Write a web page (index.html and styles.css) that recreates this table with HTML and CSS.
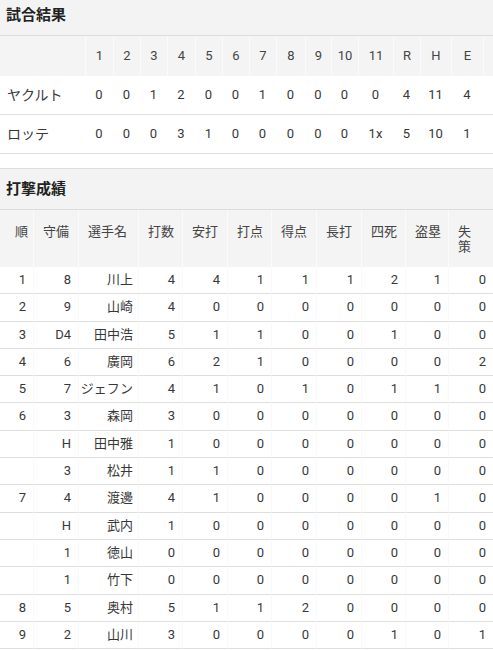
FILE: index.html
```html
<!DOCTYPE html>
<html lang="ja">
<head>
<meta charset="utf-8">
<title>試合結果</title>
<link rel="stylesheet" href="styles.css">
</head>
<body>
<section class="block">
  <h2 class="block-title first">試合結果</h2>
  <table class="linescore">
    <colgroup>
      <col class="c-team">
      <col class="c28"><col class="c27"><col class="c27"><col class="c28"><col class="c27"><col class="c27"><col class="c27"><col class="c29"><col class="c26"><col class="c27"><col class="c35"><col class="c27"><col class="c31"><col class="c32"><col>
    </colgroup>
    <thead>
      <tr>
        <th></th><th>1</th><th>2</th><th>3</th><th>4</th><th>5</th><th>6</th><th>7</th><th>8</th><th>9</th><th>10</th><th>11</th><th>R</th><th>H</th><th>E</th><th></th>
      </tr>
    </thead>
    <tbody>
      <tr>
        <td class="team">ヤクルト</td><td>0</td><td>0</td><td>1</td><td>2</td><td>0</td><td>0</td><td>1</td><td>0</td><td>0</td><td>0</td><td>0</td><td>4</td><td>11</td><td>4</td><td></td>
      </tr>
      <tr>
        <td class="team">ロッテ</td><td>0</td><td>0</td><td>0</td><td>3</td><td>1</td><td>0</td><td>0</td><td>0</td><td>0</td><td>0</td><td>1x</td><td>5</td><td>10</td><td>1</td><td></td>
      </tr>
    </tbody>
  </table>
</section>

<section class="block batting-block">
  <h2 class="block-title">打撃成績</h2>
  <table class="batting">
    <colgroup>
      <col class="b33"><col class="b45"><col class="b60"><col class="b44"><col class="b45"><col class="b44"><col class="b45"><col class="b45"><col class="b44"><col class="b43"><col class="b45">
    </colgroup>
    <thead>
      <tr>
        <th class="order">順</th><th>守備</th><th>選手名</th><th>打数</th><th>安打</th><th>打点</th><th>得点</th><th>長打</th><th>四死</th><th>盗塁</th><th>失<br>策</th>
      </tr>
    </thead>
    <tbody>
      <tr><td>1</td><td>8</td><td class="name">川上</td><td>4</td><td>4</td><td>1</td><td>1</td><td>1</td><td>2</td><td>1</td><td>0</td></tr>
      <tr><td>2</td><td>9</td><td class="name">山崎</td><td>4</td><td>0</td><td>0</td><td>0</td><td>0</td><td>0</td><td>0</td><td>0</td></tr>
      <tr><td>3</td><td>D4</td><td class="name">田中浩</td><td>5</td><td>1</td><td>1</td><td>0</td><td>0</td><td>1</td><td>0</td><td>0</td></tr>
      <tr><td>4</td><td>6</td><td class="name">廣岡</td><td>6</td><td>2</td><td>1</td><td>0</td><td>0</td><td>0</td><td>0</td><td>2</td></tr>
      <tr><td>5</td><td>7</td><td class="name">ジェフン</td><td>4</td><td>1</td><td>0</td><td>1</td><td>0</td><td>1</td><td>1</td><td>0</td></tr>
      <tr><td>6</td><td>3</td><td class="name">森岡</td><td>3</td><td>0</td><td>0</td><td>0</td><td>0</td><td>0</td><td>0</td><td>0</td></tr>
      <tr><td></td><td>H</td><td class="name">田中雅</td><td>1</td><td>0</td><td>0</td><td>0</td><td>0</td><td>0</td><td>0</td><td>0</td></tr>
      <tr><td></td><td>3</td><td class="name">松井</td><td>1</td><td>1</td><td>0</td><td>0</td><td>0</td><td>0</td><td>0</td><td>0</td></tr>
      <tr><td>7</td><td>4</td><td class="name">渡邊</td><td>4</td><td>1</td><td>0</td><td>0</td><td>0</td><td>0</td><td>1</td><td>0</td></tr>
      <tr><td></td><td>H</td><td class="name">武内</td><td>1</td><td>0</td><td>0</td><td>0</td><td>0</td><td>0</td><td>0</td><td>0</td></tr>
      <tr><td></td><td>1</td><td class="name">徳山</td><td>0</td><td>0</td><td>0</td><td>0</td><td>0</td><td>0</td><td>0</td><td>0</td></tr>
      <tr><td></td><td>1</td><td class="name">竹下</td><td>0</td><td>0</td><td>0</td><td>0</td><td>0</td><td>0</td><td>0</td><td>0</td></tr>
      <tr><td>8</td><td>5</td><td class="name">奥村</td><td>5</td><td>1</td><td>1</td><td>2</td><td>0</td><td>0</td><td>0</td><td>0</td></tr>
      <tr><td>9</td><td>2</td><td class="name">山川</td><td>3</td><td>0</td><td>0</td><td>0</td><td>0</td><td>1</td><td>0</td><td>1</td></tr>
    </tbody>
  </table>
</section>
</body>
</html>
```

FILE: styles.css
```css
html, body {
  margin: 0;
  padding: 0;
  background: #fff;
}

body {
  font-family: Roboto, "Noto Sans CJK JP", sans-serif;
  font-size: 13px;
  color: #333;
}

.block-title {
  margin: 0;
  padding: 0 6px;
  height: 40px;
  line-height: 40px;
  font-size: 15px;
  font-weight: bold;
  color: #222;
  background: #f3f3f3;
  border-top: 1px solid #dcdcdc;
  border-bottom: 1px solid #dcdcdc;
}

.block-title.first {
  height: 35px;
  line-height: 30px;
  border-top: 0;
}

.batting-block {
  margin-top: 14px;
}

table {
  width: 100%;
  table-layout: fixed;
  border-collapse: separate;
  border-spacing: 0;
}

th, td {
  padding: 0;
  font-weight: normal;
  white-space: nowrap;
}

/* line score */
.linescore th {
  height: 40px;
  line-height: 40px;
  background: #f4f4f4;
  color: #444;
  text-align: center;
  border-left: 1px solid #fbfbfb;
}

.linescore th:first-child {
  border-left: 0;
}

.linescore td {
  line-height: 38px;
  text-align: center;
  border-bottom: 1px solid #dedede;
  color: #383838;
}

.linescore td.team {
  text-align: left;
  padding-left: 7px;
  font-size: 14px;
}

.c-team { width: 85px; }
.c26 { width: 26px; }
.c27 { width: 27px; }
.c28 { width: 28px; }
.c29 { width: 29px; }
.c31 { width: 31px; }
.c32 { width: 32px; }
.c35 { width: 35px; }

/* batting */
.batting th {
  background: #f4f4f4;
  color: #444;
  text-align: left;
  vertical-align: top;
  line-height: 15px;
  padding: 14px 0 13px 9px;
  border-left: 1px solid #fbfbfb;
}

.batting th:first-child {
  border-left: 0;
}

.batting th.order {
  padding-left: 15px;
}

.batting td {
  line-height: 26.3px;
  text-align: right;
  padding-right: 7px;
  border-bottom: 1px solid #dedede;
  border-left: 1px solid #f9f9f9;
  color: #383838;
}

.batting td.name {
  padding-right: 5px;
}

.batting td:first-child {
  border-left: 0;
}

.b33 { width: 33px; }
.b43 { width: 43px; }
.b44 { width: 44px; }
.b45 { width: 45px; }
.b60 { width: 60px; }
```
